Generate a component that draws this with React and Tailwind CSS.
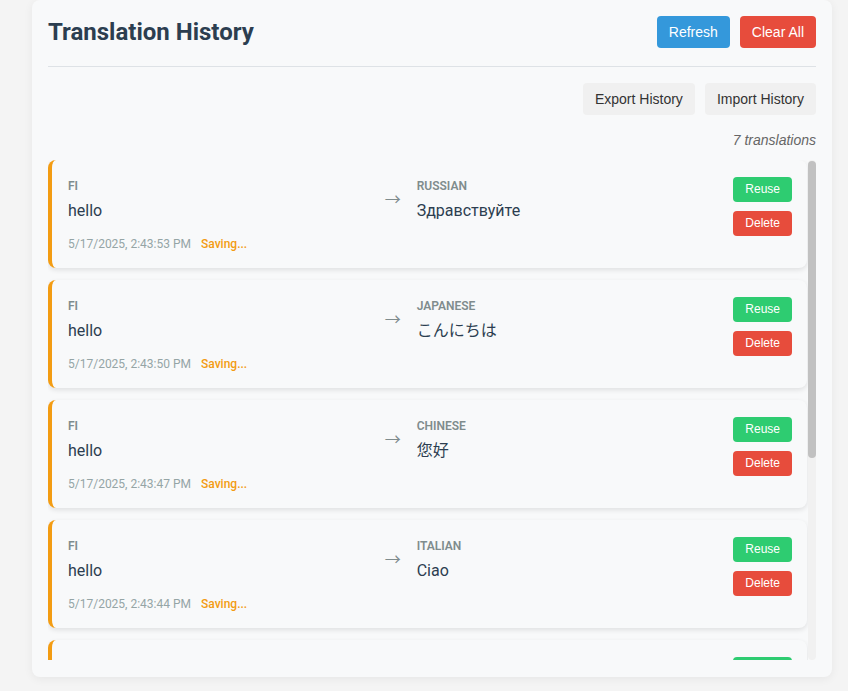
const items = [
  { from: 'FI', source: 'hello', to: 'RUSSIAN', target: 'Здравствуйте', time: '5/17/2025, 2:43:53 PM' },
  { from: 'FI', source: 'hello', to: 'JAPANESE', target: 'こんにちは', time: '5/17/2025, 2:43:50 PM' },
  { from: 'FI', source: 'hello', to: 'CHINESE', target: '您好', time: '5/17/2025, 2:43:47 PM' },
  { from: 'FI', source: 'hello', to: 'ITALIAN', target: 'Ciao', time: '5/17/2025, 2:43:44 PM' },
  { from: 'FI', source: 'hello', to: 'GERMAN', target: 'Hallo', time: '5/17/2025, 2:43:41 PM' },
  { from: 'FI', source: 'hello', to: 'FRENCH', target: 'Bonjour', time: '5/17/2025, 2:43:38 PM' },
  { from: 'FI', source: 'hello', to: 'SPANISH', target: 'Hola', time: '5/17/2025, 2:43:35 PM' },
]

const roboto = "font-['Roboto','Noto_Sans_CJK_JP','Noto_Sans_CJK_SC',sans-serif]"
const arial = "font-['Liberation_Sans',Arial,sans-serif]"

function HistoryItem({ item }) {
  return (
    <div className="mb-3 flex items-start rounded-lg border-l-4 border-[#f39c12] bg-[#f8f9fa] pt-[17px] pr-[15px] pb-[15px] pl-4 shadow-[0_2px_5px_rgba(0,0,0,0.1)]">
      <div className="min-w-0 flex-1">
        <div className="text-xs font-semibold leading-[18px] text-[#7f8c8d]">{item.from}</div>
        <div className="mt-1 text-base leading-6 text-[#2c3e50]">{item.source}</div>
        <div className="mt-3 flex text-xs leading-[18px]">
          <span className="text-[#95a5a6]">{item.time}</span>
          <span className="ml-[10px] font-medium text-[#f39c12]">Saving...</span>
        </div>
      </div>
      <div className="mx-4 pt-[11px] text-base leading-6 text-[#7f8c8d]">→</div>
      <div className="min-w-0 flex-1">
        <div className="text-xs font-semibold leading-[18px] text-[#7f8c8d]">{item.to}</div>
        <div className="mt-1 text-base leading-6 text-[#2c3e50]">{item.target}</div>
      </div>
      <div className={`ml-4 flex flex-col gap-[9px] ${arial}`}>
        <button className="rounded bg-[#2ecc71] px-3 py-[5px] text-xs leading-[15px] text-white">Reuse</button>
        <button className="rounded bg-[#e74c3c] px-3 py-[5px] text-xs leading-[15px] text-white">Delete</button>
      </div>
    </div>
  )
}

export default function App() {
  return (
    <div className={`h-[691px] overflow-hidden bg-[#f4f4f4] ${roboto}`}>
      <div className="ml-8 w-[800px] rounded-lg bg-[#f8f9fa] px-4 pt-4 pb-[17px] shadow-[0_2px_10px_rgba(0,0,0,0.06)]">
        <div className="flex items-center justify-between border-b border-[#dee2e6] pb-[18px]">
          <h2 className="text-2xl font-bold leading-8 text-[#2c3e50]">Translation History</h2>
          <div className={`flex gap-[10px] ${arial}`}>
            <button className="h-8 rounded bg-[#3498db] px-3 text-sm text-white">Refresh</button>
            <button className="h-8 rounded bg-[#e74c3c] px-3 text-sm text-white">Clear All</button>
          </div>
        </div>

        <div className={`mt-4 flex justify-end gap-[10px] ${arial}`}>
          <button className="h-8 rounded bg-[#f0f0f0] px-3 text-sm text-[#333]">Export History</button>
          <button className="h-8 rounded bg-[#f0f0f0] px-3 text-sm text-[#333]">Import History</button>
        </div>

        <div className={`mt-4 mb-[11px] text-right text-sm italic leading-[18px] text-[#666] ${arial}`}>
          7 translations
        </div>

        <div className="flex h-[500px]">
          <div className="min-w-0 flex-1 overflow-hidden pr-px">
            {items.map((item) => (
              <HistoryItem key={item.time} item={item} />
            ))}
          </div>
          <div className="flex w-2 flex-col rounded bg-[#f1f1f1]">
            <div className="mt-px h-[297px] rounded bg-[#c1c1c1]" />
          </div>
        </div>
      </div>
    </div>
  )
}
